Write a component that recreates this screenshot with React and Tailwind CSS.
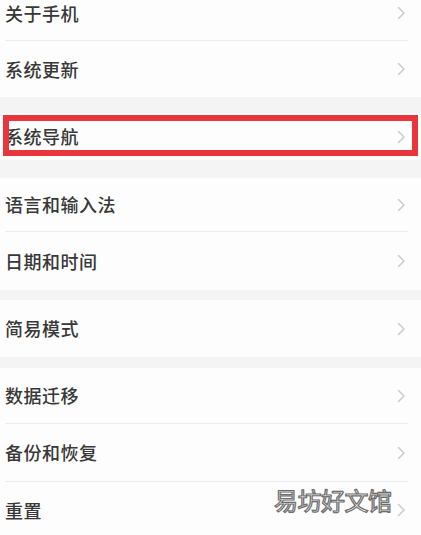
import React from "react";

function Chevron() {
  return (
    <svg width="9" height="14" viewBox="0 0 9 14" className="shrink-0">
      <polyline points="1.5,1.5 7,7 1.5,12.5" fill="none" stroke="#cdcdcd" strokeWidth="1.6" strokeLinecap="round" strokeLinejoin="round" />
    </svg>
  );
}

function Row({ label, h, extra = "" }) {
  return (
    <div className={`flex items-center justify-between pl-[5px] pr-[15px] bg-[#fdfdfd] ${h} ${extra}`}>
      <span className="text-[18px] font-medium text-[#383838] tracking-[0.5px]">{label}</span>
      <Chevron />
    </div>
  );
}

function Divider() {
  return (
    <div className="bg-[#fdfdfd] pl-[5px] pr-[13px]">
      <div className="h-px bg-[#ececec]" />
    </div>
  );
}

function Gap({ h }) {
  return <div className={`bg-[#f4f4f4] ${h}`} />;
}

export default function App() {
  return (
    <div
      className="relative w-[421px] h-[535px] overflow-hidden bg-[#fdfdfd]"
      style={{ fontFamily: '"Noto Sans CJK SC", "Noto Sans", sans-serif' }}
    >
      <Row label="关于手机" h="h-[54px]" extra="-mt-[14px]" />
      <Divider />
      <Row label="系统更新" h="h-[56px]" />
      <Gap h="h-[16px]" />
      <div className="relative">
        <Row label="系统导航" h="h-[47px]" />
        {/* red highlight box drawn over the row */}
        <div className="absolute left-[3px] right-[3px] top-[2px] bottom-[4px] border-[6px] border-[#e8363c]" />
      </div>
      <Gap h="h-[18px]" />
      <Row label="语言和输入法" h="h-[53px]" />
      <Divider />
      <Row label="日期和时间" h="h-[58px]" />
      <Gap h="h-[10px]" />
      <Row label="简易模式" h="h-[57px]" />
      <Gap h="h-[11px]" />
      <Row label="数据迁移" h="h-[55px]" />
      <Divider />
      <Row label="备份和恢复" h="h-[57px]" />
      <Divider />
      <Row label="重置" h="h-[56px]" />

      <div
        className="absolute left-[274px] top-[488px] text-[24px] text-white leading-none tracking-[-0.5px]"
        style={{ WebkitTextStroke: "1.2px #6f6f6f", textShadow: "0 0 1px #999" }}
      >
        易坊好文馆
      </div>
    </div>
  );
}
